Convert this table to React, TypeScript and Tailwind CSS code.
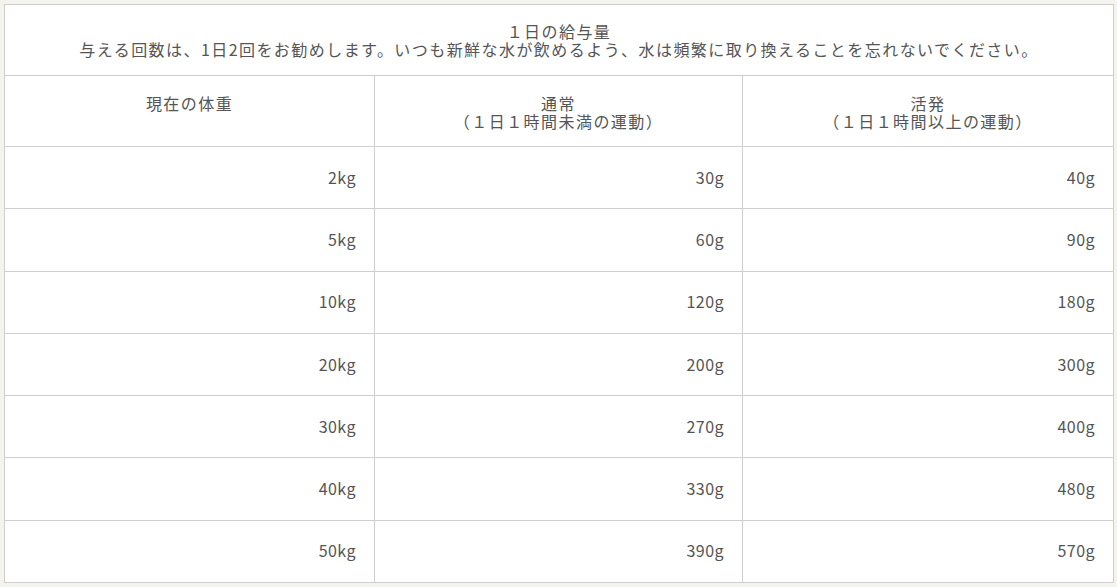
const rows: [string, string, string][] = [
  ["2kg", "30g", "40g"],
  ["5kg", "60g", "90g"],
  ["10kg", "120g", "180g"],
  ["20kg", "200g", "300g"],
  ["30kg", "270g", "400g"],
  ["40kg", "330g", "480g"],
  ["50kg", "390g", "570g"],
];

const cell = "border border-[#cfcfcf] px-[18px] align-middle";

export default function App() {
  return (
    <div
      className="min-h-screen w-[1117px] bg-[#f5f3ed] p-[4px] pb-[4px] text-[16px] leading-[18px] tracking-[0.09em] text-[#555555]"
      style={{ fontFamily: '"Noto Sans CJK JP", "Noto Sans", sans-serif' }}
    >
      <table className="w-[1109px] table-fixed border-collapse bg-white">
        <colgroup>
          <col className="w-[370px]" />
          <col className="w-[368px]" />
          <col className="w-[371px]" />
        </colgroup>
        <thead>
          <tr className="h-[71px]">
            <th colSpan={3} className={`${cell} text-center font-normal`}>
              １日の給与量
              <br />
              与える回数は、1日2回をお勧めします。いつも新鮮な水が飲めるよう、水は頻繁に取り換えることを忘れないでください。
            </th>
          </tr>
          <tr className="h-[71px]">
            <th className={`${cell} pt-[18px] text-center align-top font-normal`}>現在の体重</th>
            <th className={`${cell} pt-[18px] text-center align-top font-normal`}>
              通常
              <br />
              （１日１時間未満の運動）
            </th>
            <th className={`${cell} pt-[18px] text-center align-top font-normal`}>
              活発
              <br />
              （１日１時間以上の運動）
            </th>
          </tr>
        </thead>
        <tbody>
          {rows.map((r) => (
            <tr key={r[0]} className="h-[62.3px]">
              {r.map((v, i) => (
                <td key={i} className={`${cell} pb-[2px] text-right tracking-[0.03em]`}>
                  {v}
                </td>
              ))}
            </tr>
          ))}
        </tbody>
      </table>
    </div>
  );
}
